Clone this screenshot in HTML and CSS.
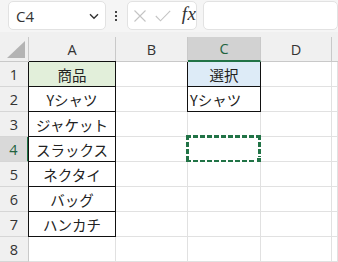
FILE: index.html
```html
<!DOCTYPE html>
<html lang="ja">
<head>
<meta charset="utf-8">
<link rel="stylesheet" href="styles.css">
</head>
<body>
<div class="toolbar">
  <div class="namebox">
    <span class="nb-text">C4</span>
    <svg class="chev" width="10" height="7" viewBox="0 0 10 7"><path d="M1 1.2 L5 5.2 L9 1.2" fill="none" stroke="#333" stroke-width="1.4"/></svg>
  </div>
  <div class="dots"><i></i><i></i><i></i></div>
  <div class="fbox">
    <svg width="12" height="12" viewBox="0 0 12 12"><path d="M0.5 0.5 L11.5 11.5 M11.5 0.5 L0.5 11.5" stroke="#c4c4c4" stroke-width="1.1" fill="none"/></svg>
    <svg width="16" height="12" viewBox="0 0 16 12"><path d="M0.8 6 L5.5 10.8 L15.2 0.8" stroke="#c4c4c4" stroke-width="1.1" fill="none"/></svg>
    <span class="fx">fx</span>
  </div>
  <div class="fbox2"></div>
</div>
<div class="sheet">
  <div class="ch corner"><svg width="18" height="17" viewBox="0 0 18 17"><path d="M18 0 L18 17 L0 17 Z" fill="#b4b4b4"/></svg></div>
  <div class="ch">A</div>
  <div class="ch">B</div>
  <div class="ch sel">C</div>
  <div class="ch">D</div>
  <div class="ch last"></div>

  <div class="rh">1</div><div class="c b hdr-a">商品</div><div class="c"></div><div class="c b hdr-c notop">選択</div><div class="c"></div><div class="c"></div>
  <div class="rh">2</div><div class="c b">Yシャツ</div><div class="c"></div><div class="c b left notop">Yシャツ</div><div class="c"></div><div class="c"></div>
  <div class="rh">3</div><div class="c b">ジャケット</div><div class="c"></div><div class="c"></div><div class="c"></div><div class="c"></div>
  <div class="rh sel">4</div><div class="c b">スラックス</div><div class="c"></div><div class="c active"><span class="ants"></span><span class="handle"></span></div><div class="c"></div><div class="c"></div>
  <div class="rh">5</div><div class="c b">ネクタイ</div><div class="c"></div><div class="c"></div><div class="c"></div><div class="c"></div>
  <div class="rh">6</div><div class="c b">バッグ</div><div class="c"></div><div class="c"></div><div class="c"></div><div class="c"></div>
  <div class="rh">7</div><div class="c b">ハンカチ</div><div class="c"></div><div class="c"></div><div class="c"></div><div class="c"></div>
  <div class="rh">8</div><div class="c"></div><div class="c"></div><div class="c"></div><div class="c"></div><div class="c"></div>
</div>
</body>
</html>
```

FILE: styles.css
```css
html, body {
  margin: 0;
  padding: 0;
  overflow: hidden;
  background: #ffffff;
}
body {
  width: 338px;
  height: 262px;
  font-family: "Noto Sans", "Noto Sans CJK JP", sans-serif;
}
.toolbar {
  height: 32px;
  background: #f5f5f5;
  display: flex;
  align-items: flex-start;
  padding: 1px 0 0 8px;
  box-sizing: border-box;
  white-space: nowrap;
}
.namebox {
  width: 101px;
  height: 29px;
  box-sizing: border-box;
  background: #fff;
  border: 1px solid #e2e2e2;
  border-radius: 5px;
  display: flex;
  align-items: center;
  padding: 0 6px 0 7px;
}
.nb-text {
  font-family: "Open Sans", "Liberation Sans", sans-serif;
  font-size: 15px;
  color: #333;
  flex: 1;
}
.chev { margin-top: 1px; }
.dots {
  width: 22px;
  height: 29px;
  display: flex;
  flex-direction: column;
  align-items: center;
  justify-content: center;
  gap: 2px;
}
.dots i {
  width: 2px;
  height: 2px;
  background: #444;
  display: block;
}
.fbox {
  width: 72px;
  height: 29px;
  box-sizing: border-box;
  background: #fff;
  border: 1px solid #e2e2e2;
  border-radius: 5px;
  display: flex;
  align-items: center;
  padding-left: 6px;
  gap: 9px;
}
.fx {
  font-family: "Liberation Serif", "DejaVu Serif", serif;
  font-style: italic;
  font-size: 19px;
  color: #333;
  margin-left: 2px;
  margin-top: -3px;
  letter-spacing: 0.5px;
}
.fbox2 {
  margin-left: 6px;
  width: 140px;
  height: 29px;
  box-sizing: border-box;
  background: #fff;
  border: 1px solid #e2e2e2;
  border-radius: 5px;
}
.sheet {
  display: grid;
  grid-template-columns: 29px 87px 72px 73px 71px 6px;
  grid-template-rows: 30px repeat(8, 25px);
  background: #f0f0f0;
}
.ch {
  align-self: end;
  height: 25px;
  box-sizing: border-box;
  background: #f0f0f0;
  border-right: 1px solid #c9c9c9;
  border-bottom: 1px solid #c9c9c9;
  font-family: "Open Sans", "Liberation Sans", sans-serif;
  font-size: 14.5px;
  color: #333;
  display: flex;
  align-items: center;
  justify-content: center;
}
.ch.corner {
  justify-content: flex-end;
  align-items: flex-end;
  padding: 0 3px 3px 0;
}
.ch.last { border-right: none; }
.ch.sel {
  background: #d2d2d2;
  color: #21633e;
  border-bottom: 2px solid #217346;
}
.rh {
  background: #f0f0f0;
  border-right: 1px solid #c9c9c9;
  border-bottom: 1px solid #d6d6d6;
  box-sizing: border-box;
  font-family: "Open Sans", "Liberation Sans", sans-serif;
  font-size: 14.5px;
  color: #333;
  display: flex;
  align-items: center;
  justify-content: center;
}
.rh.sel {
  background: #d9d9d9;
  color: #21633e;
  border-right: 2px solid #217346;
}
.c {
  position: relative;
  background: #fff;
  border-right: 1px solid #e1e1e1;
  border-bottom: 1px solid #e1e1e1;
  box-sizing: border-box;
  font-family: "Noto Sans CJK JP", sans-serif;
  font-size: 14.5px;
  color: #222;
  display: flex;
  align-items: center;
  justify-content: center;
  white-space: nowrap;
}
.c.b {
  border-right: 1px solid #111;
  border-bottom: 1px solid #111;
  box-shadow: -1px 0 0 #111, 0 -1px 0 #111;
}
.c.b.notop {
  box-shadow: -1px 0 0 #111;
}
.c.hdr-a { background: #e2efda; }
.c.hdr-c { background: #ddebf7; }
.c.left {
  justify-content: flex-start;
  padding-left: 2px;
}
.ants {
  position: absolute;
  left: -2px;
  top: -2px;
  right: -1px;
  bottom: -2px;
  background:
    repeating-linear-gradient(90deg, #217346 0 5px, #fff 5px 7px) top left / 100% 3px no-repeat,
    repeating-linear-gradient(90deg, #217346 0 5px, #fff 5px 7px) bottom left / 100% 3px no-repeat,
    repeating-linear-gradient(180deg, #217346 0 5px, #fff 5px 7px) top left / 3px 100% no-repeat,
    repeating-linear-gradient(180deg, #217346 0 5px, #fff 5px 7px) top right / 3px 100% no-repeat;
}
.handle {
  position: absolute;
  right: -3px;
  bottom: -3px;
  width: 5px;
  height: 5px;
  background: #217346;
  border: 1px solid #fff;
}
```
